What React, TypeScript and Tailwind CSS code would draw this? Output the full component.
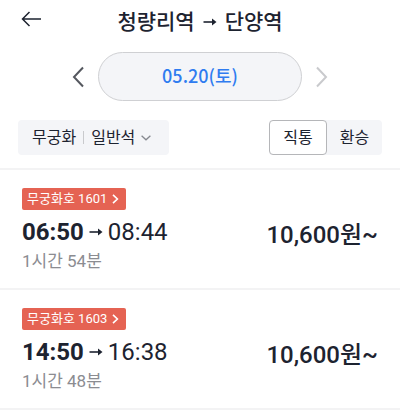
import React, { useState } from "react";

type Train = {
  no: string;
  depart: string;
  arrive: string;
  duration: string;
  price: string;
};

const trains: Train[] = [
  { no: "1601", depart: "06:50", arrive: "08:44", duration: "1시간 54분", price: "10,600원~" },
  { no: "1603", depart: "14:50", arrive: "16:38", duration: "1시간 48분", price: "10,600원~" },
];

function Arrow() {
  return (
    <svg width="14" height="10" viewBox="0 0 14 10" role="img" aria-label="→" className="shrink-0">
      <path d="M0.5 5H11" stroke="currentColor" strokeWidth="1.6" fill="none" />
      <path d="M9 1.5L13.5 5L9 8.5Z" fill="currentColor" />
    </svg>
  );
}

function Chevron({ left = false }: { left?: boolean }) {
  return (
    <svg width="12" height="22" viewBox="0 0 12 22" fill="none" stroke="currentColor" strokeWidth="2" aria-hidden="true">
      <path d={left ? "M11 1.5L2 11L11 20.5" : "M1 1.5L10 11L1 20.5"} />
    </svg>
  );
}

function TrainRow({ train }: { train: Train }) {
  return (
    <li className="flex items-end justify-between border-b-2 border-[#f3f3f4] pt-[18px] pr-[22px] pb-4 pl-[22px]">
      <div className="flex flex-col items-start">
        <button type="button" className="flex h-[22px] items-center rounded-[2px] bg-[#e56353] pr-[7px] pl-[5px] text-[13px] leading-[22px] text-white">
          <span>무궁화호 {train.no}</span>
          <svg width="7" height="10" viewBox="0 0 7 10" fill="none" stroke="currentColor" strokeWidth="1.6" className="ml-[5px]" aria-hidden="true">
            <path d="M1 0.8L5.4 5L1 9.2" />
          </svg>
        </button>
        <p className="mt-[7px] flex h-[30px] items-center gap-[5px] text-[24px] leading-[30px]">
          <span className="font-bold">{train.depart}</span>
          <Arrow />
          <span>{train.arrive}</span>
        </p>
        <p className="mt-[3px] h-[22px] text-[17px] leading-[22px] text-[#8b8c91]">{train.duration}</p>
      </div>
      <strong className="mb-[22px] text-[24px] leading-[30px] font-medium">{train.price}</strong>
    </li>
  );
}

export default function App() {
  const [mode, setMode] = useState("직통");
  return (
    <main className="bg-white font-['Roboto','Noto_Sans_CJK_KR',sans-serif] text-[#1d2330]">
      <header className="grid h-[42px] grid-cols-[44px_1fr_44px] items-center">
        <button type="button" aria-label="뒤로" className="flex h-9 items-center pb-1 pl-[21px]">
          <svg width="20" height="16" viewBox="0 0 20 16" fill="none" stroke="currentColor" strokeWidth="1.5" aria-hidden="true">
            <path d="M20 8H1.5M8.5 1L1.5 8L8.5 15" />
          </svg>
        </button>
        <h1 className="flex items-center justify-center gap-2 pt-[2px] text-[21px] leading-[30px] font-medium">
          <span>청량리역</span>
          <Arrow />
          <span>단양역</span>
        </h1>
      </header>

      <nav className="flex items-center justify-center gap-[14px] pt-[10px]">
        <button type="button" aria-label="이전 날짜" className="text-[#55585f]">
          <Chevron left />
        </button>
        <button type="button" className="h-[49px] w-[51%] rounded-full border border-[#cfd0d3] bg-[#f4f5f8] pb-1 font-['Noto_Sans_CJK_KR',sans-serif] text-[18px] leading-[30px] font-medium text-[#2f7cf0]">
          05.20(토)
        </button>
        <button type="button" aria-label="다음 날짜" className="text-[#c9cacd]">
          <Chevron />
        </button>
      </nav>

      <div className="flex items-center justify-between border-b-2 border-[#f3f3f4] pt-[19px] pr-[18px] pb-[13px] pl-[18px]">
        <button type="button" className="flex h-[35px] items-center rounded bg-[#f4f5f8] pr-[18px] pl-[14px] text-[16px] leading-[24px]">
          <span>무궁화</span>
          <span className="mx-[7px] h-[13px] w-px bg-[#c9cacd]" />
          <span>일반석</span>
          <svg width="10" height="6" viewBox="0 0 10 6" fill="none" stroke="#85888f" strokeWidth="1.3" className="ml-[6px]" aria-hidden="true">
            <path d="M0.6 0.8L5 4.8L9.4 0.8" />
          </svg>
        </button>
        <div className="flex rounded bg-[#f4f5f8] text-[16px] leading-[24px]">
          {["직통", "환승"].map((m) => (
            <button
              key={m}
              type="button"
              aria-pressed={mode === m}
              onClick={() => setMode(m)}
              className={
                mode === m
                  ? "h-[35px] w-[58px] rounded border border-[#b5b6b9] bg-white"
                  : "h-[35px] w-[55px] rounded"
              }
            >
              {m}
            </button>
          ))}
        </div>
      </div>

      <ul>
        {trains.map((t) => (
          <TrainRow key={t.no} train={t} />
        ))}
      </ul>
    </main>
  );
}
